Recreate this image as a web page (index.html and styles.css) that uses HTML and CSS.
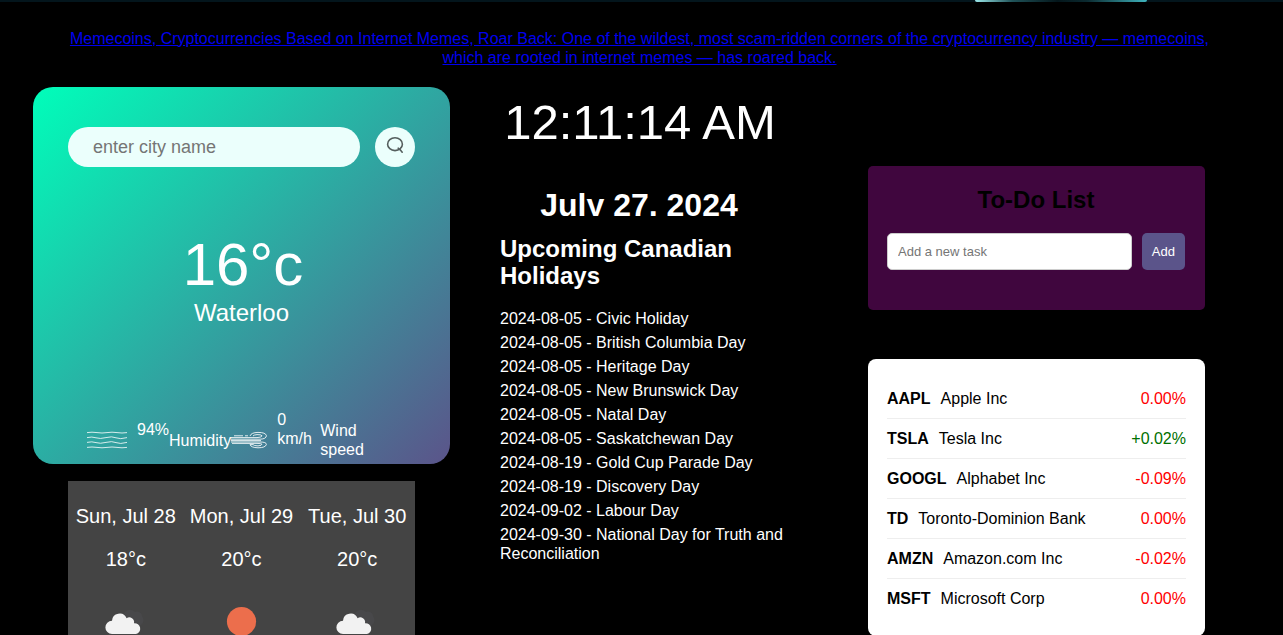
FILE: index.html
```html
<!DOCTYPE html>
<html lang="en">
<head>
<meta charset="utf-8">
<title>Dashboard</title>
<link rel="stylesheet" href="styles.css">
</head>
<body>
<div class="topbar"><div class="topbar-glow"></div></div>
<header class="news">
  <a href="#">Memecoins, Cryptocurrencies Based on Internet Memes, Roar Back: One of the wildest, most scam-ridden corners of the cryptocurrency industry — memecoins, which are rooted in internet memes — has roared back.</a>
</header>
<main class="board">
  <section class="left">
    <div class="weather">
      <form class="search">
        <input class="search-input" type="text" placeholder="enter city name" aria-label="City name">
        <button class="search-button" type="button" aria-label="Search">
          <svg width="18" height="18" viewBox="0 0 18 18" fill="none" stroke="#555f5e" stroke-width="1.6" stroke-linecap="round"><ellipse cx="9" cy="8.2" rx="7.4" ry="6.4"/><path d="M12.2 12.2L12.8 13.4L14 13.6L16.2 16.2"/></svg>
        </button>
      </form>
      <div class="temp">16°c</div>
      <div class="city">Waterloo</div>
      <div class="details">
        <svg width="40" height="18" viewBox="0 0 40 18" fill="none" stroke="#fff" stroke-width="1" stroke-opacity="0.8"><path d="M0 1.6Q5 .8 10 1.6T20 1.6T30 1.6T40 1.6M0 6.6Q5 5.4 9 6.8T19 6.6T29 6.8T40 6.6M0 11.4Q5 10.2 9 11.6T19 11.4T29 11.6T40 11.4M0 16.4Q5 15.6 10 16.4T20 16.4T30 16.4T40 16.4"/></svg>
        <span class="value">94%</span>
        <span class="label">Humidity</span>
        <svg width="36" height="18" viewBox="0 0 36 18" fill="none" stroke="#fff" stroke-width="1" stroke-opacity="0.85"><path d="M0 6.6H26Q31 6.4 31 4.8Q30 3.4 26 3.6Q23 3.8 22 5M14 4.8H17M3 4.8H12M0 8.2H29Q35.4 8 35.4 4.6Q34.6 1.4 27 1.4Q20 1.6 19 5M0 9.6H30M0 11H29Q35.4 11 35.4 13.4Q34.6 16.8 27 16.8Q20 16.6 19 13.6H22Q23 14.8 27 14.9Q31 14.6 31 13.2Q30 12.4 26 12.4H1"/></svg>
        <span class="value wind-value">0 km/h</span>
        <span class="label wind-label">Wind speed</span>
      </div>
    </div>
    <div class="forecast">
      <div class="day">
        <span>Sun, Jul 28</span><span>18°c</span>
        <svg width="50" height="50" viewBox="0 0 50 50"><path fill="#48484a" d="M22 18a7 7 0 0 1 12-4 5 5 0 0 1 7 4 6 6 0 0 1-1 9H24z"/><path fill="#f2f2f2" d="M11 36a6.5 6.5 0 0 1 0-13.2A7.6 7.6 0 0 1 25.6 20.2A4.8 4.8 0 0 1 33 25.2A5.5 5.5 0 0 1 35 36z"/></svg>
      </div>
      <div class="day">
        <span>Mon, Jul 29</span><span>20°c</span>
        <svg width="50" height="50" viewBox="0 0 50 50"><circle cx="25.5" cy="23.5" r="14.6" fill="#ec6e4c"/></svg>
      </div>
      <div class="day">
        <span>Tue, Jul 30</span><span>20°c</span>
        <svg width="50" height="50" viewBox="0 0 50 50"><path fill="#48484a" d="M22 18a7 7 0 0 1 12-4 5 5 0 0 1 7 4 6 6 0 0 1-1 9H24z"/><path fill="#f2f2f2" d="M11 36a6.5 6.5 0 0 1 0-13.2A7.6 7.6 0 0 1 25.6 20.2A4.8 4.8 0 0 1 33 25.2A5.5 5.5 0 0 1 35 36z"/></svg>
      </div>
    </div>
  </section>
  <section class="middle">
    <div class="clock">12:11:14 AM</div>
    <h1 class="date">July 27, 2024</h1>
    <h2 class="heading">Upcoming Canadian Holidays</h2>
    <ul class="holidays">
      <li>2024-08-05 - Civic Holiday</li>
      <li>2024-08-05 - British Columbia Day</li>
      <li>2024-08-05 - Heritage Day</li>
      <li>2024-08-05 - New Brunswick Day</li>
      <li>2024-08-05 - Natal Day</li>
      <li>2024-08-05 - Saskatchewan Day</li>
      <li>2024-08-19 - Gold Cup Parade Day</li>
      <li>2024-08-19 - Discovery Day</li>
      <li>2024-09-02 - Labour Day</li>
      <li>2024-09-30 - National Day for Truth and Reconciliation</li>
    </ul>
  </section>
  <section class="right">
    <div class="todo">
      <h2 class="todo-title">To-Do List</h2>
      <form class="todo-form">
        <input class="todo-input" type="text" placeholder="Add a new task" aria-label="New task">
        <button class="todo-add" type="button">Add</button>
      </form>
    </div>
    <div class="stocks">
      <table class="stock-table">
        <tbody>
          <tr><td><b>AAPL</b>Apple Inc</td><td class="down">0.00%</td></tr>
          <tr><td><b>TSLA</b>Tesla Inc</td><td class="up">+0.02%</td></tr>
          <tr><td><b>GOOGL</b>Alphabet Inc</td><td class="down">-0.09%</td></tr>
          <tr><td><b>TD</b>Toronto-Dominion Bank</td><td class="down">0.00%</td></tr>
          <tr><td><b>AMZN</b>Amazon.com Inc</td><td class="down">-0.02%</td></tr>
          <tr><td><b>MSFT</b>Microsoft Corp</td><td class="down">0.00%</td></tr>
        </tbody>
      </table>
    </div>
  </section>
</main>
</body>
</html>
```

FILE: styles.css
```css
* {
  box-sizing: border-box;
}

html {
  scrollbar-width: none;
}

body {
  margin: 0;
  background: #000;
  color: #fff;
  font: 16px/19px "Liberation Sans", Arial, sans-serif;
}

input,
button {
  font-family: inherit;
}

.topbar {
  display: flex;
  justify-content: flex-end;
  height: 2px;
  padding-right: 136px;
  background: #03151c;
}

.topbar-glow {
  width: 172px;
  border-radius: 0 0 4px 4px;
  background: linear-gradient(90deg, #9be8ea, #1f5258 22%, #04161b 48%, #0b2a30 65%, #3fb4bd);
}

.news {
  padding: 27px 64px 0 60px;
  text-align: center;
}

.news a {
  color: #00e;
}

.board {
  display: grid;
  grid-template-columns: 417fr 318fr 337fr;
  gap: 50px;
  align-items: start;
  padding: 20px 78px 0 33px;
}

.weather {
  padding: 40px 35px 0;
  border-radius: 20px;
  background: linear-gradient(135deg, #00feba, #5b548a);
  text-align: center;
  overflow: hidden;
}

.search {
  display: flex;
  gap: 15px;
}

.search-input {
  flex: 1;
  min-width: 0;
  height: 40px;
  padding: 0 25px;
  border: 0;
  border-radius: 20px;
  background: #ebfffc;
  font-size: 18px;
}

.search-button {
  display: flex;
  align-items: center;
  justify-content: center;
  width: 40px;
  height: 40px;
  padding: 0 0 4px;
  border: 0;
  border-radius: 50%;
  background: #ebfffc;
}

.temp {
  margin-top: 63px;
  padding-left: 3px;
  font-size: 60px;
  line-height: 69px;
}

.city {
  font-size: 24px;
  line-height: 27px;
}

.details {
  display: flex;
  align-items: center;
  margin: 84px 0 -6px;
  padding-left: 19px;
  text-align: left;
}

.details svg {
  flex: none;
}

.value {
  margin: 0 0 22px 10px;
}

.wind-value {
  width: 35px;
}

.wind-label {
  width: 60px;
  margin-left: 8px;
}

.forecast {
  display: grid;
  grid-template-columns: repeat(3, 1fr);
  margin: 17px 35px 0;
  padding: 24px 0 20px;
  background: #444;
}

.day {
  display: flex;
  flex-direction: column;
  align-items: center;
  gap: 20px;
  font-size: 20px;
  line-height: 23px;
}

.day svg {
  margin-top: 7px;
}

.middle {
  padding: 7px 32px 0 0;
}

.clock {
  padding-right: 6px;
  font-size: 49px;
  line-height: 56px;
  text-align: center;
  white-space: nowrap;
}

.date {
  height: 27px;
  margin: 39px 0 0;
  padding-right: 8px;
  overflow: hidden;
  font-size: 32px;
  line-height: 32px;
  text-align: center;
}

.heading {
  margin: 19px 0 0;
  font-size: 24px;
  line-height: 27px;
}

.holidays {
  display: grid;
  gap: 5px;
  margin: 20px 0 0;
  padding: 0;
  list-style: none;
}

.right {
  display: grid;
  gap: 49px;
  padding-top: 79px;
}

.todo {
  padding: 20px 20px 40px 19px;
  border-radius: 5px;
  background: #40063e;
}

.todo-title {
  margin: 0 0 20px;
  color: #000;
  font-size: 24px;
  line-height: 27px;
  text-align: center;
}

.todo-form {
  display: flex;
  gap: 10px;
}

.todo-input {
  flex: 1;
  min-width: 0;
  height: 37px;
  padding: 0 10px;
  border: 1px solid #ccc;
  border-radius: 5px;
  font-size: 13px;
}

.todo-add {
  padding: 0 10px;
  border: 0;
  border-radius: 5px;
  background: #5b548a;
  color: #fff;
  font-size: 13px;
}

.stocks {
  padding: 20px 19px 18px;
  border-radius: 8px;
  background: #fff;
  color: #000;
}

.stock-table {
  width: 100%;
  border-collapse: separate;
  border-spacing: 0;
}

.stock-table td {
  height: 40px;
  padding: 0;
  border-bottom: 1px solid #eee;
}

.stock-table tr:last-child td {
  height: 39px;
  border-bottom: 0;
}

.stock-table b {
  margin-right: 10px;
}

.stock-table .up,
.stock-table .down {
  text-align: right;
}

.stock-table .up {
  color: #007000;
}

.stock-table .down {
  color: #f00;
}
```
